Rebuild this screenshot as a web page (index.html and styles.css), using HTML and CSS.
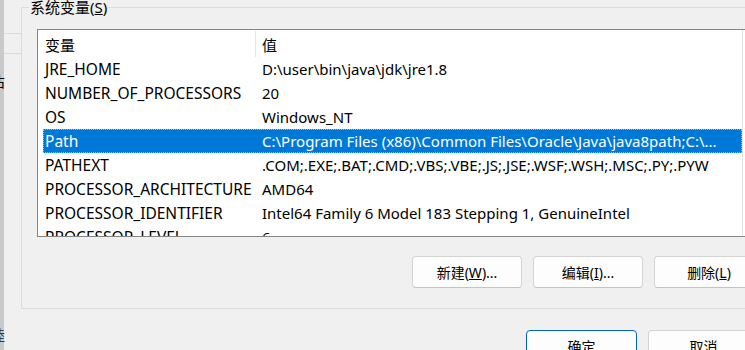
FILE: index.html
```html
<!DOCTYPE html>
<html lang="zh-CN">
<head>
<meta charset="utf-8">
<title>系统变量</title>
<link rel="stylesheet" href="styles.css">
</head>
<body>
<div class="screen">
  <div class="bgwin">
    <div class="strip">
      <div class="frag frag-a"><span>佔</span></div>
      <div class="frag frag-b"><span>睦</span></div>
    </div>
    <div class="margin-lines">
      <div class="mline mline-a"></div>
      <div class="mline mline-b"></div>
    </div>
  </div>
  <div class="dialog">
    <fieldset class="group">
      <legend class="group-title">系统变量(<u>S</u>)</legend>
      <div class="list">
        <div class="lv">
          <div class="hdr">
            <div class="c1">变量</div>
            <div class="hsep"></div>
            <div class="c2">值</div>
          </div>
          <div class="row"><div class="c1">JRE_HOME</div><div class="c2">D:\user\bin\java\jdk\jre1.8</div></div>
          <div class="row"><div class="c1">NUMBER_OF_PROCESSORS</div><div class="c2">20</div></div>
          <div class="row"><div class="c1">OS</div><div class="c2">Windows_NT</div></div>
          <div class="row sel"><div class="c1">Path</div><div class="c2">C:\Program Files (x86)\Common Files\Oracle\Java\java8path;C:\...</div></div>
          <div class="row"><div class="c1">PATHEXT</div><div class="c2">.COM;.EXE;.BAT;.CMD;.VBS;.VBE;.JS;.JSE;.WSF;.WSH;.MSC;.PY;.PYW</div></div>
          <div class="row"><div class="c1">PROCESSOR_ARCHITECTURE</div><div class="c2">AMD64</div></div>
          <div class="row"><div class="c1">PROCESSOR_IDENTIFIER</div><div class="c2">Intel64 Family 6 Model 183 Stepping 1, GenuineIntel</div></div>
          <div class="row"><div class="c1">PROCESSOR_LEVEL</div><div class="c2">6</div></div>
        </div>
        <div class="vline"></div>
        <div class="track"></div>
      </div>
      <div class="btns">
        <button class="btn">新建(<u>W</u>)...</button>
        <button class="btn">编辑(<u>I</u>)...</button>
        <button class="btn">删除(<u>L</u>)</button>
      </div>
    </fieldset>
    <div class="footer">
      <button class="btn btn-default">确定</button>
      <button class="btn">取消</button>
    </div>
  </div>
</div>
</body>
</html>
```
FILE: styles.css
```css
* { box-sizing: border-box; }
html, body { margin: 0; padding: 0; }
body {
  background: #f0f0f0;
  font-family: "Noto Sans", "Noto Sans CJK SC", sans-serif;
  font-size: 15px;
  color: #000;
}
.screen {
  width: 745px;
  height: 350px;
  overflow: hidden;
  display: flex;
  background: #f0f0f0;
}
.bgwin {
  display: flex;
  flex: 0 0 21px;
  height: 350px;
}
.strip {
  width: 4px;
  height: 100%;
  background: #cacaca;
  display: flex;
  flex-direction: column;
}
.frag {
  display: flex;
  justify-content: flex-end;
  width: 5px;
  overflow: hidden;
  font-size: 15px;
  line-height: 16px;
  white-space: nowrap;
}
.frag-a { margin-top: 73px; }
.frag-b { margin-top: 238px; color: #2a3a5a; }
.margin-lines {
  flex: 1;
  display: flex;
  flex-direction: column;
}
.mline { height: 1px; background: #dadada; }
.mline-a { margin-top: 33px; }
.mline-b { margin-top: 19px; }

.dialog {
  flex: 1;
  min-width: 0;
}
.group {
  margin: 0;
  width: 800px;
  border: 1px solid #dcdcdc;
  padding: 15px 0 20px 15px;
  min-width: 0;
}
.group-title {
  margin-left: -8px;
  padding: 0 1px;
  font-size: 15px;
  line-height: 14px;
  height: 14px;
}
.list {
  height: 208px;
  border: 1px solid #858585;
  border-right: none;
  background: #fff;
  display: flex;
  overflow: hidden;
}
.lv {
  width: 704px;
  padding-left: 5px;
  flex: 0 0 704px;
}
.hdr {
  display: flex;
  height: 27px;
  padding-top: 1px;
}
.hdr .c1 {
  width: 212px;
  padding: 2px 0 0 2px;
  line-height: 24px;
}
.hsep {
  width: 1px;
  height: 26px;
  background: #e5e5e5;
}
.hdr .c2 {
  flex: 1;
  padding: 2px 0 0 6px;
  line-height: 24px;
}
.row {
  display: flex;
  height: 24px;
  line-height: 24px;
  width: 699px;
  white-space: nowrap;
}
.row .c1 {
  width: 213px;
  padding-left: 2px;
  overflow: hidden;
  font-size: 15.5px;
}
.row .c2 {
  flex: 1;
  padding-left: 6px;
  overflow: hidden;
}
.row.sel {
  background: #0078d7;
  color: #fff;
  outline: 1px dotted #f3a05a;
  outline-offset: -1px;
}
.vline {
  width: 1px;
  background: #e3e3e3;
  flex: 0 0 1px;
}
.track { flex: 1; }

.btns {
  display: flex;
  gap: 11px;
  margin-top: 19px;
  padding-left: 375px;
}
.btn {
  width: 110px;
  height: 32px;
  border: 1px solid #d3d3d3;
  border-bottom-color: #c4c4c4;
  border-radius: 4px;
  background: #fdfdfd;
  font-family: "Noto Sans", "Noto Sans CJK SC", sans-serif;
  font-size: 14px;
  color: #000;
  padding: 0;
  flex: 0 0 auto;
}
.footer {
  display: flex;
  gap: 11px;
  margin-top: 21px;
  padding-left: 505px;
}
.footer .btn { width: 111px; }
.btn-default {
  border-color: #0067c0;
}
```
